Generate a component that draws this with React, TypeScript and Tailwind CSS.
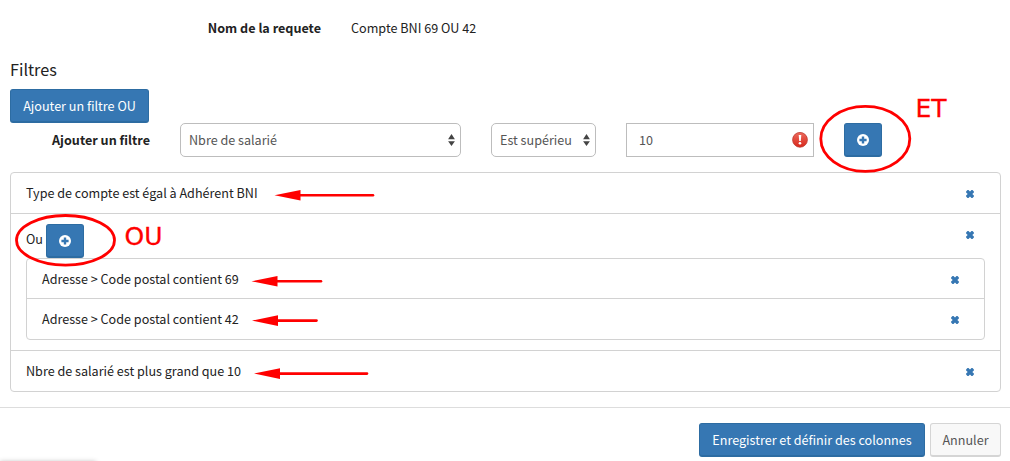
import { useState, type ReactNode } from "react";

function PlusIcon() {
  return (
    <svg viewBox="0 0 12 12" className="h-3 w-3">
      <circle cx="6" cy="6" r="6" fill="#fff" />
      <path d="M4.8 2.4h2.4v2.4h2.4v2.4H7.2v2.4H4.8V7.2H2.4V4.8h2.4z" fill="#3677b3" />
    </svg>
  );
}

function RemoveButton({ onClick }: { onClick?: () => void }) {
  return (
    <button type="button" onClick={onClick} aria-label="Supprimer">
      <svg viewBox="0 0 8 8" className="h-2 w-2">
        <path
          d="M0.1 1.5 1.5 0.1H2.5L4 1.5 5.5 0.1H6.5L7.9 1.5V2.4L6.3 4 7.9 5.6V6.5L6.5 7.9H5.5L4 6.5 2.5 7.9H1.5L0.1 6.5V5.6L1.7 4 0.1 2.4z"
          fill="#3677b3"
        />
      </svg>
    </button>
  );
}

function AddButton() {
  return (
    <button
      type="button"
      aria-label="Ajouter"
      className="flex h-[34px] w-[38px] items-center justify-center rounded-[3px] border border-b-2 border-[#2d6ca2] bg-[#3677b3]"
    >
      <PlusIcon />
    </button>
  );
}

function SelectBox({ label, className }: { label: string; className: string }) {
  return (
    <div
      className={`flex h-[34px] items-center justify-between rounded-[5px] border border-[#bdbdbd] pl-2 text-[#555] ${className}`}
    >
      <span className="whitespace-nowrap">{label}</span>
      <svg viewBox="0 0 7 12" className="mr-[5px] h-3 w-[7px]" fill="#444">
        <path d="M3.5 0 6.9 5.200H.1zM3.500 12 .1 7.200h6.800z" />
      </svg>
    </div>
  );
}

function FilterRow({ children, className }: { children: ReactNode; className: string }) {
  return (
    <div className={`flex items-center justify-between pl-[15px] ${className}`}>
      <span className="pb-0.5">{children}</span>
      <RemoveButton />
    </div>
  );
}

const arrows = [
  { x: 274.5, y: 195.2, end: 373 },
  { x: 251.5, y: 281.3, end: 321 },
  { x: 252, y: 320.6, end: 316.5 },
  { x: 254, y: 373.6, end: 367 },
];

// Red marks drawn over the form
function Annotations() {
  return (
    <svg
      viewBox="0 0 1010 461"
      className="pointer-events-none absolute top-0 left-0 h-[461px] w-[1010px]"
    >
      <g fill="none" stroke="#f00" strokeWidth="2.8">
        <ellipse cx="865.3" cy="138.8" rx="44.5" ry="32.5" />
        <ellipse cx="65.5" cy="240.3" rx="49" ry="24.8" />
      </g>
      {arrows.map((a) => (
        <g key={a.y} fill="#f00">
          <path d={`M${a.x} ${a.y}l26 -5.3v10.6z`} />
          <path
            d={`M${a.x + 24} ${a.y}H${a.end}`}
            stroke="#f00"
            strokeWidth="2.6"
            strokeLinecap="round"
          />
        </g>
      ))}
      <g className="font-['DejaVu_Sans',sans-serif]" fill="#f00" stroke="#f00" strokeWidth="0.3">
        <text x="915.5" y="117" fontSize="25">
          ET
        </text>
        <text x="124.5" y="245" fontSize="25">
          OU
        </text>
      </g>
    </svg>
  );
}

export default function App() {
  const [valeur, setValeur] = useState("10");

  return (
    <div className="relative h-[461px] w-[1010px] overflow-hidden bg-white font-['Noto_Sans_CJK_SC',sans-serif] text-[12.6px] leading-5 text-[#222]">
      <div className="flex pt-[18px]">
        <div className="w-[321px] text-right font-bold">Nom de la requete</div>
        <div className="pl-[30px]">Compte BNI 69 OU 42</div>
      </div>

      <div className="px-[10px]">
        <h2 className="mt-[19px] text-[16.2px] leading-6">Filtres</h2>
        <button
          type="button"
          className="mt-2 flex h-[34px] w-[139px] items-center justify-center rounded-[3px] border border-b-2 border-[#2d6ca2] bg-[#3677b3] text-white"
        >
          Ajouter un filtre OU
        </button>

        <div className="flex items-center">
          <div className="w-[140px] text-right font-bold">Ajouter un filtre</div>
          <SelectBox label="Nbre de salarié" className="ml-[30px] w-[281px]" />
          <SelectBox label="Est supérieu" className="ml-[30px] w-[105px]" />
          <div className="ml-[30px] flex h-[34px] w-[188px] items-center border border-[#bdbdbd] pr-[5px] pl-3">
            <input
              value={valeur}
              onChange={(e) => setValeur(e.target.value)}
              className="min-w-0 flex-1 text-[#555] outline-none"
            />
            <svg viewBox="0 0 16 16" className="h-4 w-4">
              <defs>
                <linearGradient id="alerte" x1="0" y1="0" x2="0" y2="1">
                  <stop offset="0" stopColor="#ec6a5c" />
                  <stop offset="1" stopColor="#d8281c" />
                </linearGradient>
              </defs>
              <circle cx="8" cy="7.8" r="7.4" fill="url(#alerte)" stroke="#bf3a30" strokeWidth=".8" />
              <path d="M6.7 3.1h2.600l-.5 5.800H7.200z" fill="#fff" />
              <circle cx="8" cy="11.3" r="1.3" fill="#fff" />
            </svg>
          </div>
          <div className="ml-[30px]">
            <AddButton />
          </div>
        </div>

        <div className="mt-[15px] w-[991px] rounded border border-[#d2d2d2]">
          <FilterRow className="h-10 pt-0.5 pr-[26px]">Type de compte est égal à Adhérent BNI</FilterRow>
          <div className="border-y border-[#d2d2d2] p-[15px] py-[10px]">
            <div className="flex">
              <span className="w-5 pt-[5px]">Ou</span>
              <AddButton />
              <div className="mr-[11px] ml-auto flex h-[22px] items-center">
                <RemoveButton />
              </div>
            </div>
            <div className="rounded border border-[#d2d2d2]">
              <FilterRow className="h-10 border-b border-[#d2d2d2] pt-[3px] pr-[25px]">
                Adresse &gt; Code postal contient 69
              </FilterRow>
              <FilterRow className="h-10 pt-[2px] pr-[25px]">
                Adresse &gt; Code postal contient 42
              </FilterRow>
            </div>
          </div>
          <FilterRow className="h-10 pt-0.5 pr-[26px]">Nbre de salarié est plus grand que 10</FilterRow>
        </div>
      </div>

      <div className="mt-[15px] flex justify-end gap-[5px] border-t border-[#ddd] pt-[15px] pr-[9px]">
        <button
          type="button"
          className="h-[34px] w-[226px] rounded-[3px] border border-b-2 border-[#2d6ca2] bg-[#3677b3] text-white"
        >
          Enregistrer et définir des colonnes
        </button>
        <button
          type="button"
          className="h-[34px] w-[71px] rounded-[3px] border border-b-2 border-[#d5d5d5] bg-[#f8f8f8] text-[#555]"
        >
          Annuler
        </button>
      </div>

      <div className="absolute top-[462px] left-0 h-5 w-[96px] shadow-[0_0_5px_rgba(0,0,0,0.3)]" />
      <Annotations />
    </div>
  );
}
